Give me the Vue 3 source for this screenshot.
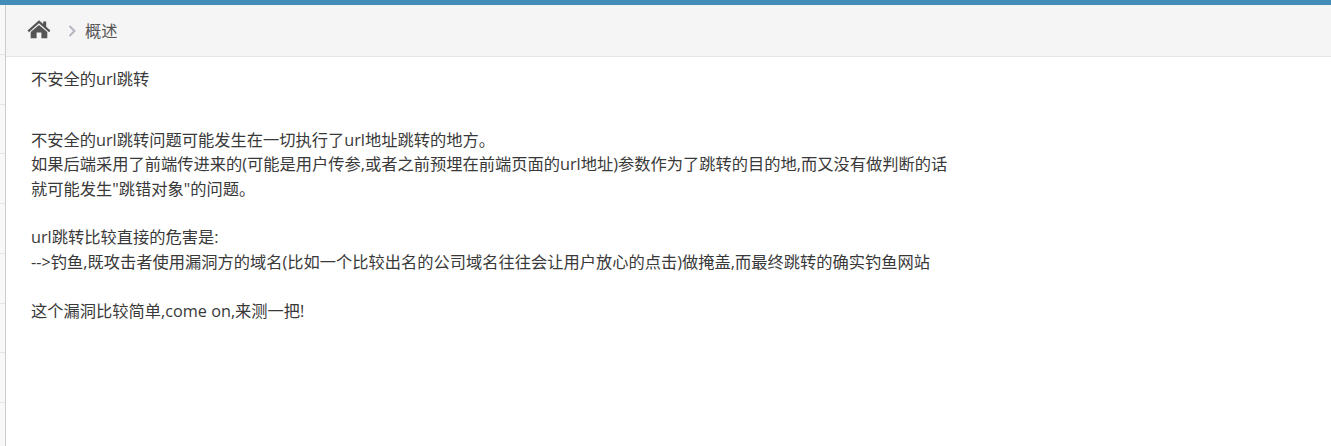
<template>
  <div class="page">
    <div class="topbar"></div>
    <div class="layout">
      <aside class="sidebar">
        <div v-for="n in 9" :key="n" class="side-item"></div>
      </aside>
      <main class="main">
        <div class="breadcrumbs">
          <svg class="home" viewBox="0 0 26 20" width="24" height="20">
            <path d="M13 0.6 L17.5 4.6 V1.8 H20.8 V7.6 L25.4 11.6 L23.9 13.4 L13 3.9 L2.1 13.4 L0.6 11.6 Z" fill="#555" />
            <path d="M13 5.6 L22 13.2 V20 H15.6 V13.8 H10.4 V20 H4 V13.2 Z" fill="#555" />
          </svg>
          <svg class="chevron" viewBox="0 0 8 12" width="8" height="12">
            <path d="M1.5 1 L6.5 6 L1.5 11" fill="none" stroke="#b2b6bf" stroke-width="2" />
          </svg>
          <span class="crumb">概述</span>
        </div>
        <div class="content">
          <p class="title">不安全的url跳转</p>
          <p class="text">
            不安全的url跳转问题可能发生在一切执行了url地址跳转的地方。<br />
            如果后端采用了前端传进来的(可能是用户传参,或者之前预埋在前端页面的url地址)参数作为了跳转的目的地,而又没有做判断的话<br />
            就可能发生"跳错对象"的问题。
          </p>
          <p class="text">
            url跳转比较直接的危害是:<br />
            --&gt;钓鱼,既攻击者使用漏洞方的域名(比如一个比较出名的公司域名往往会让用户放心的点击)做掩盖,而最终跳转的确实钓鱼网站
          </p>
          <p class="text">这个漏洞比较简单,come on,来测一把!</p>
        </div>
      </main>
    </div>
  </div>
</template>

<script setup>
</script>

<style>
html, body {
  margin: 0;
  background: #fff;
}
</style>

<style scoped>
.page {
  height: 446px;
  overflow: hidden;
  font-family: "Open Sans", "Noto Sans CJK SC", sans-serif;
  font-size: 16.25px;
  color: #393939;
}
.topbar {
  height: 5px;
  background: #438eb9;
}
.layout {
  display: flex;
  height: 441px;
}
.sidebar {
  width: 5px;
  background: #f8f8f8;
  border-right: 1px solid #ccc;
  flex: none;
}
.side-item {
  height: 48.75px;
  border-bottom: 1px solid #e5e5e5;
}
.main {
  flex: 1;
  min-width: 0;
}
.breadcrumbs {
  display: flex;
  align-items: center;
  height: 51px;
  padding-left: 21px;
  background: #f5f5f5;
  border-bottom: 1px solid #e5e5e5;
}
.breadcrumbs .home {
  margin-top: -3px;
}
.chevron {
  margin-left: 17px;
}
.crumb {
  margin-left: 9px;
  margin-top: -2px;
  color: #555;
}
.content {
  padding-left: 25px;
  line-height: 24.375px;
}
.content p {
  margin: 0;
}
.title {
  padding-top: 10px;
  padding-bottom: 36.5px;
}
.text {
  margin-bottom: 24.375px !important;
}
</style>
